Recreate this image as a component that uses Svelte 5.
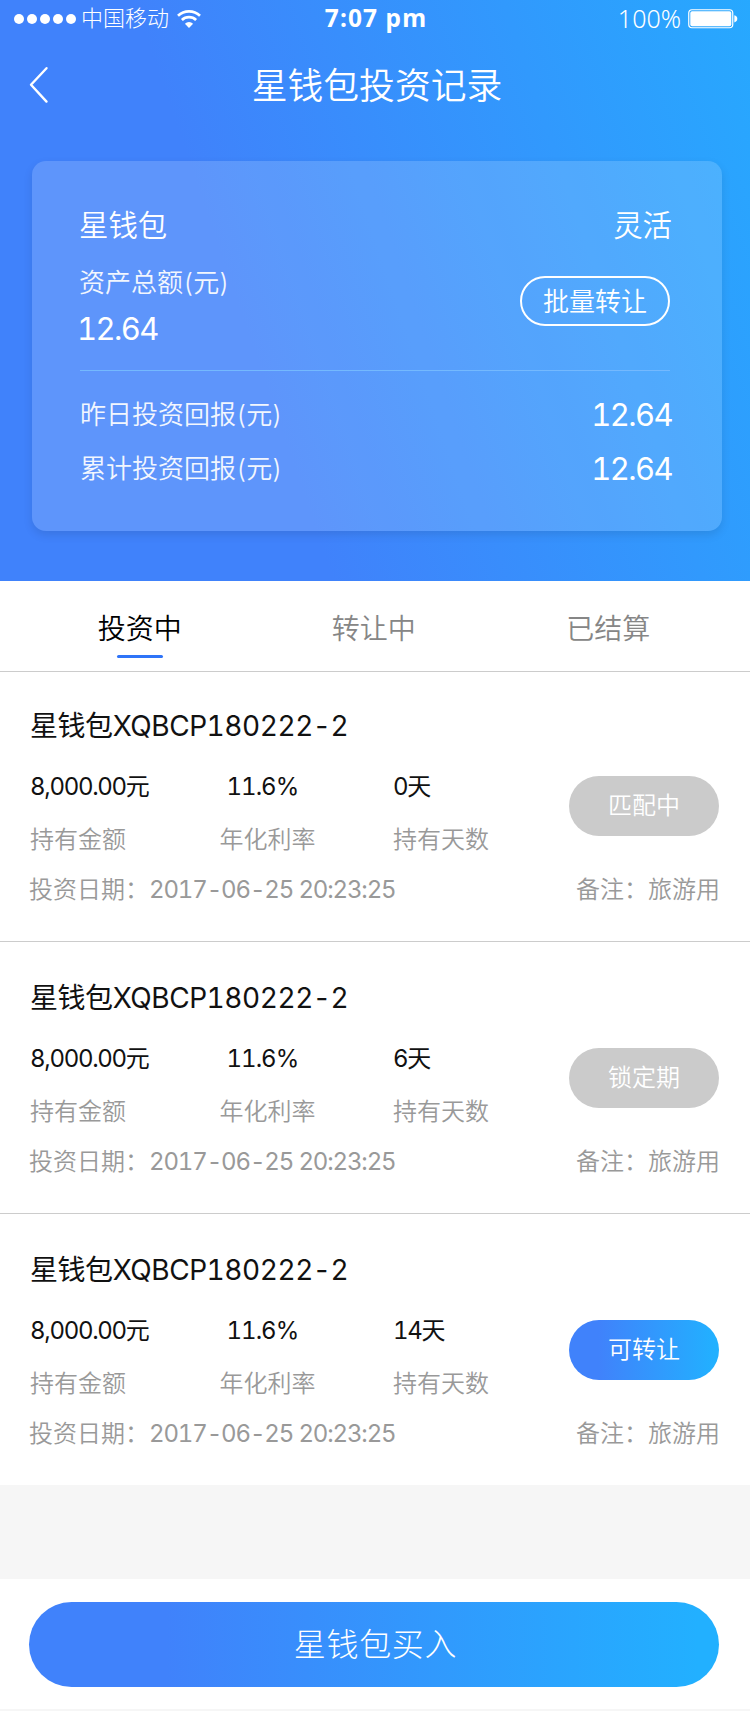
<script>
  const tabs = ['投资中', '转让中', '已结算'];
  const records = [
    { days: '0天', status: '匹配中', active: false },
    { days: '6天', status: '锁定期', active: false },
    { days: '14天', status: '可转让', active: true }
  ];
  let current = $state(0);
</script>

<div class="page">
  <header class="hero">
    <div class="statusbar">
      <div class="carrier">
        <span class="dots">{#each Array(5) as _}<i></i>{/each}</span>
        <span class="operator">中国移动</span>
        <svg class="wifi" width="24" height="18" viewBox="0 0 24 18">
          <g fill="none" stroke="#fff" stroke-width="2.7">
            <path d="M1 5.8A16 16 0 0 1 23 5.8" />
            <path d="M4.9 9.9A10.3 10.3 0 0 1 19.1 9.9" />
          </g>
          <path d="M12 18L7.9 13.7A6 6 0 0 1 16.1 13.7Z" fill="#fff" />
        </svg>
      </div>
      <div class="time">7:07 pm</div>
      <div class="power">
        <span>100%</span>
        <svg width="50" height="20" viewBox="0 0 50 20">
          <rect x="0.75" y="0.75" width="44" height="18" rx="3.2" fill="none" stroke="#fff" stroke-width="1.2" />
          <rect x="2.3" y="2.3" width="41" height="15" rx="1.8" fill="#fff" />
          <path d="M46.3 6.2Q49.3 7 49.3 9.8T46.3 13.4Z" fill="#fff" />
        </svg>
      </div>
    </div>

    <nav class="titlebar">
      <svg class="back" width="20" height="38" viewBox="0 0 20 38">
        <path d="M17.5 2.2L2 18.8L17.5 35.6" fill="none" stroke="#fff" stroke-width="2.4" stroke-linecap="round" stroke-linejoin="round" />
      </svg>
      <h1>星钱包投资记录</h1>
    </nav>

    <section class="card">
      <div class="row name"><span>星钱包</span><span>灵活</span></div>
      <div class="row asset">
        <div>
          <div class="caption">资产总额(元)</div>
          <div class="amount">12.64</div>
        </div>
        <button class="batch">批量转让</button>
      </div>
      <div class="row stat first"><span class="caption">昨日投资回报(元)</span><span class="amount">12.64</span></div>
      <div class="row stat"><span class="caption">累计投资回报(元)</span><span class="amount">12.64</span></div>
    </section>
  </header>

  <div class="tabs">
    {#each tabs as tab, i}
      <button class="tab" class:on={current === i} onclick={() => (current = i)}>{tab}</button>
    {/each}
  </div>

  <main>
    {#each records as r}
      <article>
        <h2>星钱包XQBCP180222-2</h2>
        <div class="middle">
          <dl class="c1"><dt>8,000.00元</dt><dd>持有金额</dd></dl>
          <dl class="c2"><dt>11.6%</dt><dd>年化利率</dd></dl>
          <dl class="c3"><dt>{r.days}</dt><dd>持有天数</dd></dl>
          <button class="status" class:active={r.active}>{r.status}</button>
        </div>
        <div class="foot"><span>投资日期：<span class="date">2017-06-25 20:23:25</span></span><span>备注：旅游用</span></div>
      </article>
    {/each}
  </main>

  <footer><button class="buy">星钱包买入</button></footer>
</div>

<style>
  :global(body) {
    background: #f6f6f6;
  }
  .page {
    width: 750px;
    height: 1711px;
    display: flex;
    flex-direction: column;
    overflow: hidden;
    background: #f6f6f6;
    font-family: Inter, 'Noto Sans CJK SC', sans-serif;
    font-weight: 350;
    font-variant-numeric: tabular-nums;
    color: #111;
  }
  h1, h2, dl, dt, dd {
    margin: 0;
    font-weight: inherit;
  }
  button {
    font: inherit;
    border: 0;
    padding: 0;
    margin: 0;
    background: none;
    color: inherit;
  }
  .hero {
    height: 581px;
    flex: none;
    color: #fff;
    background: linear-gradient(71deg, #4082fb 35%, #22b0ff 113%);
  }
  .statusbar {
    height: 38px;
    display: grid;
    grid-template-columns: 1fr auto 1fr;
    align-items: center;
    padding: 0 12px 0 14px;
    box-sizing: border-box;
    line-height: 38px;
  }
  .carrier, .power, .dots {
    display: flex;
    align-items: center;
  }
  .dots {
    gap: 3px;
    margin-right: 5px;
  }
  .dots i {
    width: 10px;
    height: 10px;
    border-radius: 50%;
    background: #fff;
  }
  .operator {
    font-size: 22px;
    font-weight: 300;
    line-height: 36px;
    height: 38px;
    margin-right: 8px;
  }
  .time {
    font: 700 24.5px/33px 'Noto Sans', sans-serif;
    letter-spacing: 1.1px;
    height: 36px;
  }
  .power {
    justify-content: flex-end;
    font-family: 'Noto Sans', sans-serif;
    font-weight: 300;
    font-size: 25px;
    gap: 7px;
  }
  .power span {
    line-height: 36px;
    height: 38px;
  }
  .titlebar {
    height: 94px;
    display: grid;
    grid-template-columns: 50px 1fr 50px;
    align-items: center;
    padding-left: 4px;
  }
  .back {
    margin-left: 25px;
  }
  h1 {
    font-size: 35.8px;
    line-height: 94px;
    padding-top: 1px;
    height: 93px;
    text-align: center;
  }
  .card {
    height: 370px;
    margin: 29px 28px 0 32px;
    padding: 43px 52px 0 48px;
    box-sizing: border-box;
    border-radius: 14px;
    background: rgba(255, 255, 255, 0.155);
    box-shadow: 0 4px 10px rgba(0, 0, 0, 0.1);
  }
  .row {
    display: flex;
    justify-content: space-between;
  }
  .name {
    font-size: 29.4px;
    line-height: 43px;
    height: 44px;
    margin: 0 -2px 0 -1px;
  }
  .asset {
    height: 122px;
    border-bottom: 1px solid #74b9fe;
  }
  .caption {
    font-size: 26px;
    opacity: 0.92;
  }
  .asset .caption {
    line-height: 36px;
    padding-top: 17px;
    margin-left: -1px;
  }
  .amount {
    font-size: 31px;
    line-height: 44px;
    letter-spacing: -1.6px;
    font-weight: 380;
  }
  .asset .amount {
    margin: 6px 0 0 -3px;
  }
  .batch {
    width: 150px;
    height: 50px;
    margin-top: 28px;
    border: 2px solid #fff;
    border-radius: 25px;
    font-size: 26px;
    line-height: 48px;
    box-sizing: border-box;
  }
  .stat {
    line-height: 54px;
    height: 54px;
    margin: 0 -2px 0 0;
  }
  .stat .amount {
    line-height: 53px;
  }
  .stat.first {
    margin-top: 17px;
  }
  .tabs {
    height: 91px;
    flex: none;
    box-sizing: border-box;
    display: grid;
    grid-template-columns: repeat(3, 234.5px);
    padding-left: 22px;
    background: #fff;
    border-bottom: 1px solid #ccc;
  }
  .tab {
    position: relative;
    height: 90px;
    font-size: 28px;
    line-height: 96px;
    color: #868686;
  }
  .tab.on {
    color: #000;
    text-indent: 1px;
  }
  .tab.on::after {
    content: '';
    position: absolute;
    left: 95px;
    top: 74px;
    width: 46px;
    height: 3px;
    border-radius: 2px;
    background: #2f74f8;
  }
  article {
    height: 272px;
    box-sizing: border-box;
    padding: 34px 30px 0;
    background: #fff;
    border-bottom: 1px solid #ccc;
  }
  article:first-child {
    height: 270px;
    padding-top: 32px;
  }
  article:last-child {
    height: 271px;
    border: 0;
  }
  h2 {
    font-size: 28px;
    line-height: 45px;
    height: 44px;
    letter-spacing: -0.45px;
    font-weight: 380;
  }
  .middle {
    display: grid;
    grid-template-columns: 189.5px 173.5px 1fr 150px;
    height: 120px;
    margin-right: 1px;
  }
  dt, dd {
    font-size: 24px;
  }
  dt {
    line-height: 36px;
    height: 36px;
    padding-top: 21px;
    letter-spacing: -1.3px;
    font-weight: 380;
  }
  .c2 dt {
    padding-left: 7px;
    letter-spacing: -1px;
  }
  dd {
    line-height: 36px;
    margin-top: 17px;
    color: #999;
  }
  .status {
    width: 150px;
    height: 60px;
    margin-top: 28px;
    border-radius: 30px;
    font-size: 24px;
    line-height: 60px;
    color: #fff;
    background: #cbcbcb;
  }
  .status.active {
    background: linear-gradient(90deg, #4082fb 20%, #22b0ff 97%);
  }
  .foot {
    display: flex;
    justify-content: space-between;
    margin-left: -1px;
    font-size: 24px;
    line-height: 44px;
    color: #999;
    white-space: nowrap;
  }
  .date {
    letter-spacing: -1.15px;
    font-weight: 380;
  }
  footer {
    height: 130px;
    flex: none;
    margin-top: 94px;
    padding: 23px 31px 0 29px;
    box-sizing: border-box;
    background: #fff;
  }
  .buy {
    width: 690px;
    height: 85px;
    border-radius: 42.5px;
    font-size: 32px;
    font-weight: 300;
    line-height: 85px;
    letter-spacing: 0.7px;
    text-indent: 3px;
    color: #fff;
    background: linear-gradient(90deg, #4082fb 20%, #22b0ff 97%);
  }
</style>
